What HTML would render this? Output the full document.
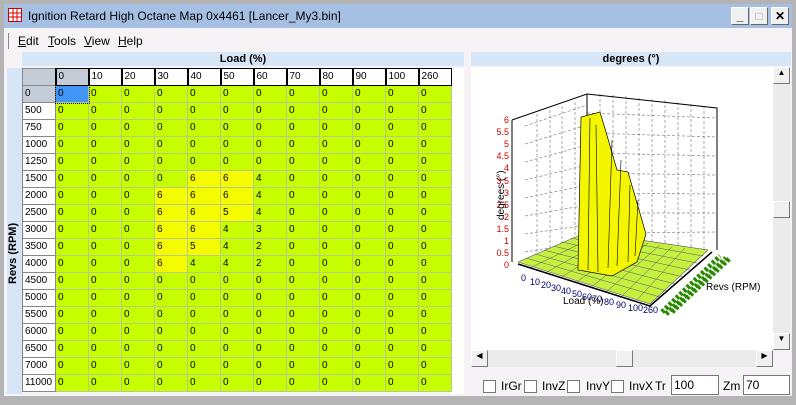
<!DOCTYPE html>
<html><head><meta charset="utf-8"><style>
*{margin:0;padding:0;box-sizing:border-box}
body{width:796px;height:405px;background:#b4b4b4;font-family:"Liberation Sans",sans-serif;font-size:11px;position:relative;overflow:hidden}
#win{position:absolute;left:4px;top:4px;width:788px;height:392px;background:#f6f3f6}
#title{position:absolute;left:0;top:0;width:788px;height:24px;background:#a6c0e4;}
#title .t{position:absolute;left:24px;top:5px;font-size:12px;color:#000}
.btn{position:absolute;top:3px;width:18px;height:18px;background:#f0f0f0;border:1px solid #fff;border-right-color:#666;border-bottom-color:#666;font-size:12px;text-align:center;line-height:16px;font-weight:bold}
#menu{position:absolute;top:26px;left:0;height:20px;width:788px}
#menu span{position:absolute;top:4px;font-size:12px}
.hdr{position:absolute;background:#d6e6f6;font-weight:bold;font-size:11px;text-align:center;height:14px;line-height:14px}
table{border-collapse:collapse;position:absolute;left:18px;top:64px;table-layout:fixed}
td{width:33px;height:17px;border:1px solid #b8c890;font-size:10px;padding:0 0 0 2px;line-height:14px;background:#c6fe00;overflow:hidden}
tr:first-child td{background:#fff;border:1px solid #000;border-left:2px solid #000;height:17px}
td:first-child{background:#fff;border:1px solid #888;}
td.y{background:#f6fc00}
td.s{background:#3f96f6;outline:1px dotted #000}
td.h0{background:#c4ccd8!important}
.sb{position:absolute;background:#f0f0f0;border:1px solid #fff;border-right-color:#777;border-bottom-color:#777;font-size:8px;text-align:center}
.cb{position:absolute;top:376px;width:13px;height:13px;border:1px solid #777;background:#fff}
.lb{position:absolute;top:375px;font-size:12px}
</style></head><body>
<div id="win">
<div id="title"><svg style="position:absolute;left:4px;top:4px" width="14" height="14"><rect x="0.5" y="0.5" width="13" height="13" fill="#fff" stroke="#c00"/><path d="M0 5h14M0 9h14M5 0v14M9 0v14" stroke="#c00"/></svg><span class="t">Ignition Retard High Octane Map 0x4461 [Lancer_My3.bin]</span>
<div class="btn" style="left:727px">_</div><div class="btn" style="left:746px;color:#aaa">□</div><div class="btn" style="left:767px">✕</div></div>
<div id="menu"><div style="position:absolute;left:4px;top:3px;width:1px;height:16px;background:#888"></div><span style="left:14px"><u>E</u>dit</span><span style="left:44px"><u>T</u>ools</span><span style="left:80px"><u>V</u>iew</span><span style="left:114px"><u>H</u>elp</span></div>
<div class="hdr" style="left:18px;top:48px;width:442px">Load (%)</div>
<div style="position:absolute;left:3px;top:64px;width:15px;height:326px;background:#d6e6f6"></div>
<div style="position:absolute;left:3px;top:280px;transform:rotate(-90deg);transform-origin:0 0;font-weight:bold;font-size:11px;width:120px">Revs (RPM)</div>
<div style="position:absolute;left:447px;top:64px;width:13px;height:326px;background:#fff"></div>
<table>
<tr><td class="h0" style="border:1px solid #888"></td><td class="h0">0</td><td>10</td><td>20</td><td>30</td><td>40</td><td>50</td><td>60</td><td>70</td><td>80</td><td>90</td><td>100</td><td>260</td></tr>
<tr><td class="h0">0</td><td class="s">0</td><td>0</td><td>0</td><td>0</td><td>0</td><td>0</td><td>0</td><td>0</td><td>0</td><td>0</td><td>0</td><td>0</td></tr>
<tr><td>500</td><td>0</td><td>0</td><td>0</td><td>0</td><td>0</td><td>0</td><td>0</td><td>0</td><td>0</td><td>0</td><td>0</td><td>0</td></tr>
<tr><td>750</td><td>0</td><td>0</td><td>0</td><td>0</td><td>0</td><td>0</td><td>0</td><td>0</td><td>0</td><td>0</td><td>0</td><td>0</td></tr>
<tr><td>1000</td><td>0</td><td>0</td><td>0</td><td>0</td><td>0</td><td>0</td><td>0</td><td>0</td><td>0</td><td>0</td><td>0</td><td>0</td></tr>
<tr><td>1250</td><td>0</td><td>0</td><td>0</td><td>0</td><td>0</td><td>0</td><td>0</td><td>0</td><td>0</td><td>0</td><td>0</td><td>0</td></tr>
<tr><td>1500</td><td>0</td><td>0</td><td>0</td><td>0</td><td class="y">6</td><td class="y">6</td><td>4</td><td>0</td><td>0</td><td>0</td><td>0</td><td>0</td></tr>
<tr><td>2000</td><td>0</td><td>0</td><td>0</td><td class="y">6</td><td class="y">6</td><td class="y">6</td><td>4</td><td>0</td><td>0</td><td>0</td><td>0</td><td>0</td></tr>
<tr><td>2500</td><td>0</td><td>0</td><td>0</td><td class="y">6</td><td class="y">6</td><td class="y">5</td><td>4</td><td>0</td><td>0</td><td>0</td><td>0</td><td>0</td></tr>
<tr><td>3000</td><td>0</td><td>0</td><td>0</td><td class="y">6</td><td class="y">6</td><td>4</td><td>3</td><td>0</td><td>0</td><td>0</td><td>0</td><td>0</td></tr>
<tr><td>3500</td><td>0</td><td>0</td><td>0</td><td class="y">6</td><td class="y">5</td><td>4</td><td>2</td><td>0</td><td>0</td><td>0</td><td>0</td><td>0</td></tr>
<tr><td>4000</td><td>0</td><td>0</td><td>0</td><td class="y">6</td><td>4</td><td>4</td><td>2</td><td>0</td><td>0</td><td>0</td><td>0</td><td>0</td></tr>
<tr><td>4500</td><td>0</td><td>0</td><td>0</td><td>0</td><td>0</td><td>0</td><td>0</td><td>0</td><td>0</td><td>0</td><td>0</td><td>0</td></tr>
<tr><td>5000</td><td>0</td><td>0</td><td>0</td><td>0</td><td>0</td><td>0</td><td>0</td><td>0</td><td>0</td><td>0</td><td>0</td><td>0</td></tr>
<tr><td>5500</td><td>0</td><td>0</td><td>0</td><td>0</td><td>0</td><td>0</td><td>0</td><td>0</td><td>0</td><td>0</td><td>0</td><td>0</td></tr>
<tr><td>6000</td><td>0</td><td>0</td><td>0</td><td>0</td><td>0</td><td>0</td><td>0</td><td>0</td><td>0</td><td>0</td><td>0</td><td>0</td></tr>
<tr><td>6500</td><td>0</td><td>0</td><td>0</td><td>0</td><td>0</td><td>0</td><td>0</td><td>0</td><td>0</td><td>0</td><td>0</td><td>0</td></tr>
<tr><td>7000</td><td>0</td><td>0</td><td>0</td><td>0</td><td>0</td><td>0</td><td>0</td><td>0</td><td>0</td><td>0</td><td>0</td><td>0</td></tr>
<tr><td>11000</td><td>0</td><td>0</td><td>0</td><td>0</td><td>0</td><td>0</td><td>0</td><td>0</td><td>0</td><td>0</td><td>0</td><td>0</td></tr>
</table>
<div class="hdr" style="left:467px;top:48px;width:320px">degrees (°)</div>
<div style="position:absolute;left:467px;top:63px;width:302px;height:283px;background:#fff">
<svg width="302" height="283" style="position:absolute;left:0;top:0" font-family="Liberation Sans" font-size="9">
<g transform="translate(-471,-67)">
<g stroke="#888" stroke-dasharray="3,2" stroke-width="0.7" fill="none">
<path d="M525 126L587 105M525 144L587 125M525 162L587 145M525 180L587 165M525 198L587 185M525 216L587 205M525 234L587 225M525 252L587 242"/>
<path d="M587 113L717 118M587 133L717 137M587 153L717 156M587 173L717 175M587 193L717 194M587 213L717 213M587 233L717 232"/>
<path d="M537 114V258M550 110V256M562 106V253M575 102V250M600 94V238M613 95V239M626 96V240M639 98V242M652 99V244M665 100V246M678 102V248M691 104V250M704 106V252"/>
</g>
<path d="M512 120L587 94L717 108V250M512 120V262M587 94V232" stroke="#000" fill="none"/>
<polygon points="518,262 587,232 708,250 650,304" fill="#c6f040" stroke="#556" stroke-width="0.6"/>
<g stroke="#556" stroke-width="0.5"><path d="M530 268L598 235M545 273L610 237M560 278L622 239M575 283L635 241M590 288L648 243M605 293L660 245M620 298L672 247M635 302L685 248"/><path d="M526 258L660 297M535 254L667 291M544 250L675 284M553 246L683 277M562 242L690 270M571 238L697 263M580 234L703 256"/></g>
<polygon points="578,270 581,117 600,112 606,132 617,170 628,172 646,234 637,262 612,276" fill="#f4f600" stroke="#000" stroke-width="0.7"/>
<path d="M588 270L590 118M598 272L596 125M608 268L612 140M617 266L621 160M628 262L630 185M635 256L638 200" stroke="#000" stroke-width="0.6"/>
<path d="M518 264L650 306L712 252" stroke="#000" stroke-width="1.5" fill="none"/>
<g fill="#c00" text-anchor="end"><text x="509" y="123">6</text><text x="509" y="135">5.5</text><text x="509" y="147">5</text><text x="509" y="159">4.5</text><text x="509" y="171">4</text><text x="509" y="184">3.5</text><text x="509" y="196">3</text><text x="509" y="208">2.5</text><text x="509" y="220">2</text><text x="509" y="232">1.5</text><text x="509" y="244">1</text><text x="509" y="256">0.5</text><text x="509" y="268">0</text></g>
<text x="0" y="0" transform="translate(504,220) rotate(-90)" font-size="10">degrees (°)</text>
<g fill="#006" font-size="9"><text x="521" y="281">0</text><text x="530" y="285">10</text><text x="541" y="288">20</text><text x="551" y="291">30</text><text x="561" y="294">40</text><text x="572" y="297">50</text><text x="582" y="300">60</text><text x="592" y="302">70</text><text x="604" y="305">80</text><text x="616" y="308">90</text><text x="628" y="311">100</text><text x="643" y="313">260</text></g>
<text x="563" y="304" font-size="10">Load (%)</text>
<text x="706" y="290" font-size="10">Revs (RPM)</text>
<path d="M662 312L720 256M666 314L726 258M672 312L730 258" stroke="#2a8a00" stroke-width="5" stroke-dasharray="3,2" fill="none"/>
</g></svg></div>
<div style="position:absolute;left:769px;top:63px;width:17px;height:283px;background:#ebebeb"></div>
<div class="sb" style="left:769px;top:63px;width:17px;height:17px">▲</div>
<div class="sb" style="left:769px;top:197px;width:17px;height:17px"></div>
<div class="sb" style="left:769px;top:329px;width:17px;height:17px">▼</div>
<div style="position:absolute;left:467px;top:346px;width:302px;height:17px;background:#ebebeb"></div>
<div class="sb" style="left:467px;top:346px;width:17px;height:17px">◀</div>
<div class="sb" style="left:612px;top:346px;width:17px;height:17px"></div>
<div class="sb" style="left:752px;top:346px;width:17px;height:17px">▶</div>
<div class="cb" style="left:479px"></div><span class="lb" style="left:497px">IrGr</span>
<div class="cb" style="left:520px"></div><span class="lb" style="left:538px">InvZ</span>
<div class="cb" style="left:563px"></div><span class="lb" style="left:582px">InvY</span>
<div class="cb" style="left:607px"></div><span class="lb" style="left:625px">InvX</span>
<span class="lb" style="left:651px">Tr</span>
<div style="position:absolute;left:667px;top:371px;width:48px;height:20px;border:1px solid #777;background:#fff;font-size:12px;padding:2px">100</div>
<span class="lb" style="left:719px">Zm</span>
<div style="position:absolute;left:739px;top:371px;width:47px;height:20px;border:1px solid #777;background:#fff;font-size:12px;padding:2px">70</div>
</div>
</body></html>
